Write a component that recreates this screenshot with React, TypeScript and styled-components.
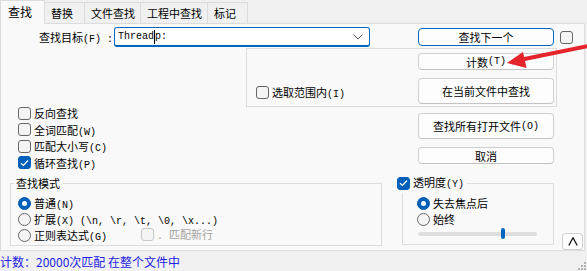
import React from 'react';
import styled, { createGlobalStyle, css } from 'styled-components';

const GlobalStyle = createGlobalStyle`
  html, body {
    margin: 0;
    padding: 0;
    background: #f0f0f0;
  }
  body {
    font-family: "Noto Sans CJK SC", "Noto Sans", sans-serif;
    font-size: 11px;
    color: #000;
  }
  * {
    box-sizing: border-box;
  }
`;

const Window = styled.div`
  position: relative;
  width: 587px;
  height: 271px;
  background: #f0f0f0;
  display: flex;
  flex-direction: column;
  overflow: hidden;
`;

const TabBar = styled.div`
  display: flex;
  align-items: flex-end;
  height: 23px;
  flex: none;
`;

const Tab = styled.div<{ $active?: boolean }>`
  height: 21px;
  min-width: 41px;
  padding: 0 5px 0 6px;
  margin-left: -1px;
  display: flex;
  align-items: center;
  background: #f0f0f0;
  border: 1px solid #dcdcdc;
  border-bottom: none;
  white-space: nowrap;
  line-height: 1;

  ${(p) =>
    p.$active &&
    css`
      position: relative;
      z-index: 1;
      margin-left: 0;
      margin-bottom: -1px;
      width: 45px;
      height: 24px;
      padding-left: 7px;
      padding-bottom: 1px;
      font-size: 12px;
      background: #f9f9f9;
    `}
`;

const Panel = styled.div`
  width: 585px;
  height: 228px;
  flex: none;
  background: #f9f9f9;
  border: 1px solid #dcdcdc;
  display: flex;
  flex-direction: column;
`;

// half-width characters in the dialog come out in a narrow mono face
const Latin = styled.span`
  font-family: "Liberation Mono", monospace;
  font-size: 10px;
`;

function Mixed({ text }: { text: string }) {
  return (
    <>
      {text.split(/([\x20-\x7e]+)/).map((part, i) =>
        /^[\x20-\x7e]+$/.test(part) ? <Latin key={i}>{part}</Latin> : part
      )}
    </>
  );
}

const FindRow = styled.div`
  display: flex;
  align-items: center;
  height: 20px;
  margin-top: 3px;
`;

const FieldLabel = styled.label`
  width: 113px;
  padding-right: 1px;
  text-align: right;
  white-space: pre;
`;

const Combo = styled.div`
  width: 256px;
  height: 20px;
  display: flex;
  align-items: center;
  padding: 0 6px 0 3px;
  background: #fff;
  border: 1px solid #0067c0;
  border-bottom-width: 2px;
  border-radius: 3px;
  font-family: "Liberation Mono", monospace;
  font-size: 10px;
`;

const ComboText = styled.span`
  flex: 1;
  display: flex;
  align-items: center;
  white-space: pre;
`;

const Caret = styled.span`
  width: 1px;
  height: 14px;
  background: #000;
`;

const Button = styled.button<{ $h: number; $primary?: boolean }>`
  width: 136px;
  height: ${(p) => p.$h}px;
  padding: 0;
  flex: none;
  display: flex;
  align-items: center;
  justify-content: center;
  font: inherit;
  color: #000;
  background: #fdfdfd;
  border: 1px solid ${(p) => (p.$primary ? '#0067c0' : '#d0d0d0')};
  border-bottom-color: ${(p) => (p.$primary ? '#0067c0' : '#c2c2c2')};
  border-radius: 4px;
  white-space: pre;
`;

const NextButton = styled(Button)`
  margin-left: 48px;
  align-self: flex-start;
  margin-top: 1px;
`;

const SideCheck = styled.div`
  margin-left: 6px;
  display: flex;
`;

const SelectionGroup = styled.div`
  margin: 1px 0 0 245px;
  width: 311px;
  height: 59px;
  flex: none;
  display: flex;
  justify-content: space-between;
  padding: 4px 2px 0 9px;
  border: 1px solid #dcdcdc;
`;

const SelectionCheck = styled.div`
  margin-top: 31px;
`;

const ButtonColumn = styled.div<{ $gap: number }>`
  display: flex;
  flex-direction: column;
  gap: ${(p) => p.$gap}px;
`;

const MiddleRow = styled.div`
  display: flex;
`;

const OptionList = styled.div`
  margin-top: -2px;
  padding-left: 17px;
  display: flex;
  flex-direction: column;
`;

const OptionRow = styled.div`
  height: 16.5px;
  display: flex;
  align-items: center;
`;

const RightButtons = styled(ButtonColumn)`
  margin: 6px 30px 0 auto;
`;

const BottomRow = styled.div`
  margin-top: auto;
  display: flex;
  align-items: flex-start;
`;

const Group = styled.fieldset<{ $w: number; $ml: number; $pl: number }>`
  margin: 0 0 4px ${(p) => p.$ml}px;
  width: ${(p) => p.$w}px;
  min-width: 0;
  padding: 2px 0 2px ${(p) => p.$pl}px;
  border: 1px solid #dcdcdc;
  display: flex;
  flex-direction: column;
`;

const Legend = styled.legend<{ $ml: number }>`
  margin-left: ${(p) => p.$ml}px;
  padding: 0 3px 0 2px;
  height: 20px;
  line-height: 16px;
  display: flex;
  align-items: center;
  gap: 3px;
`;

const ModeRow = styled.div`
  height: 16px;
  display: flex;
  align-items: center;
`;

const NewlineOption = styled.div`
  margin-left: 34px;
`;

const SliderRow = styled.div`
  height: 14px;
  padding: 0 0 0 1px;
  margin-bottom: 1px;
  display: flex;
  align-items: center;
`;

const Track = styled.div`
  position: relative;
  width: 119px;
  height: 4px;
  background: #dedede;
  border-radius: 2px;
`;

const Thumb = styled.div`
  position: absolute;
  left: 83px;
  top: -4px;
  width: 4px;
  height: 11px;
  border-radius: 2px;
  background: #0067c0;
`;

const CollapseButton = styled.button`
  align-self: flex-end;
  margin: 0 1px 0 8px;
  width: 21px;
  height: 17px;
  padding: 0;
  display: flex;
  align-items: center;
  justify-content: center;
  background: #fdfdfd;
  border: 1px solid #d0d0d0;
  border-radius: 3px;
`;

const StatusBar = styled.div`
  flex: 1;
  display: flex;
  align-items: center;
  font-size: 12px;
  color: #2222e6;
  white-space: nowrap;
`;

const Grip = styled.svg`
  margin-left: auto;
  align-self: flex-end;
  margin-right: 1px;
  margin-bottom: 1px;
`;

const ArrowOverlay = styled.svg`
  position: absolute;
  left: 500px;
  top: 40px;
  pointer-events: none;
`;

const BoxShape = styled.span<{ $checked?: boolean; $disabled?: boolean; $round?: boolean }>`
  width: 13px;
  height: 13px;
  flex: none;
  display: inline-flex;
  align-items: center;
  justify-content: center;
  border-radius: ${(p) => (p.$round ? '50%' : '3px')};
  border: 1px solid ${(p) => (p.$checked ? '#005fb8' : p.$disabled ? '#c8c8c8' : '#666')};
  background: ${(p) => (p.$checked ? '#005fb8' : '#f4f4f4')};
`;

const Dot = styled.span`
  width: 5px;
  height: 5px;
  border-radius: 50%;
  background: #fff;
`;

const OptionLabel = styled.label<{ $disabled?: boolean }>`
  display: inline-flex;
  align-items: center;
  gap: 3px;
  white-space: pre;
  color: ${(p) => (p.$disabled ? '#a2a2a2' : '#000')};
`;

function Check({ label, checked, disabled }: { label?: string; checked?: boolean; disabled?: boolean }) {
  return (
    <OptionLabel $disabled={disabled}>
      <BoxShape $checked={checked} $disabled={disabled}>
        {checked && (
          <svg width="9" height="8" viewBox="0 0 9 8">
            <polyline points="1,4.2 3.4,6.5 8,1.5" fill="none" stroke="#fff" strokeWidth="1.2" />
          </svg>
        )}
      </BoxShape>
      {label && (
        <span>
          <Mixed text={label} />
        </span>
      )}
    </OptionLabel>
  );
}

function Radio({ label, checked }: { label: string; checked?: boolean }) {
  return (
    <OptionLabel>
      <BoxShape $round $checked={checked}>
        {checked && <Dot />}
      </BoxShape>
      <span>
        <Mixed text={label} />
      </span>
    </OptionLabel>
  );
}

const tabs = ['查找', '替换', '文件查找', '工程中查找', '标记'];

export default function App() {
  return (
    <>
      <GlobalStyle />
      <Window>
        <TabBar>
          {tabs.map((t, i) => (
            <Tab key={t} $active={i === 0}>
              {t}
            </Tab>
          ))}
        </TabBar>

        <Panel>
          <FindRow>
            <FieldLabel>
              <Mixed text="查找目标(F) :" />
            </FieldLabel>
            <Combo>
              <ComboText>
                Thread
                <Caret />
                p:
              </ComboText>
              <svg width="10" height="6" viewBox="0 0 10 6">
                <polyline points="0.5,0.5 5,5 9.5,0.5" fill="none" stroke="#555" strokeWidth="1" />
              </svg>
            </Combo>
            <NextButton $h={18} $primary>
              查找下一个
            </NextButton>
            <SideCheck>
              <Check />
            </SideCheck>
          </FindRow>

          <SelectionGroup>
            <SelectionCheck>
              <Check label="选取范围内(I)" />
            </SelectionCheck>
            <ButtonColumn $gap={8}>
              <Button $h={17}>
                <Mixed text="计数(T)" />
              </Button>
              <Button $h={26}>在当前文件中查找</Button>
            </ButtonColumn>
          </SelectionGroup>

          <MiddleRow>
            <OptionList>
              <OptionRow>
                <Check label="反向查找" />
              </OptionRow>
              <OptionRow>
                <Check label="全词匹配(W)" />
              </OptionRow>
              <OptionRow>
                <Check label="匹配大小写(C)" />
              </OptionRow>
              <OptionRow>
                <Check label="循环查找(P)" checked />
              </OptionRow>
            </OptionList>
            <RightButtons $gap={8}>
              <Button $h={26}>
                <Mixed text="查找所有打开文件(O)" />
              </Button>
              <Button $h={17}>取消</Button>
            </RightButtons>
          </MiddleRow>

          <BottomRow>
            <Group $w={372} $ml={9} $pl={7}>
              <Legend $ml={-4}>查找模式</Legend>
              <ModeRow>
                <Radio label="普通(N)" checked />
              </ModeRow>
              <ModeRow>
                <Radio label={'扩展(X) (\\n, \\r, \\t, \\0, \\x...)'} />
              </ModeRow>
              <ModeRow>
                <Radio label="正则表达式(G)" />
                <NewlineOption>
                  <Check label=". 匹配新行" disabled />
                </NewlineOption>
              </ModeRow>
            </Group>

            <Group $w={152} $ml={20} $pl={14}>
              <Legend $ml={-22}>
                <Check label="透明度(Y)" checked />
              </Legend>
              <ModeRow>
                <Radio label="失去焦点后" checked />
              </ModeRow>
              <ModeRow>
                <Radio label="始终" />
              </ModeRow>
              <SliderRow>
                <Track>
                  <Thumb />
                </Track>
              </SliderRow>
            </Group>

            <CollapseButton>
              <svg width="10" height="9" viewBox="0 0 10 9">
                <polyline points="0.8,8.5 5,0.8 9.2,8.5" fill="none" stroke="#111" strokeWidth="1.3" />
              </svg>
            </CollapseButton>
          </BottomRow>
        </Panel>

        <StatusBar>
          计数：20000次匹配 在整个文件中
          <Grip width="8" height="8" viewBox="0 0 8 8">
            {[
              [6, 0],
              [6, 3],
              [3, 3],
              [6, 6],
              [3, 6],
              [0, 6],
            ].map(([x, y]) => (
              <rect key={`${x}-${y}`} x={x} y={y} width="2" height="2" fill="#b0b0b0" />
            ))}
          </Grip>
        </StatusBar>

        <ArrowOverlay width="87" height="32" viewBox="0 0 87 32">
          <line x1="22" y1="19.5" x2="88" y2="6" stroke="#e5242b" strokeWidth="4" strokeLinecap="round" />
          <polygon points="7,23 23,12 26.5,28" fill="#e5242b" />
        </ArrowOverlay>
      </Window>
    </>
  );
}
